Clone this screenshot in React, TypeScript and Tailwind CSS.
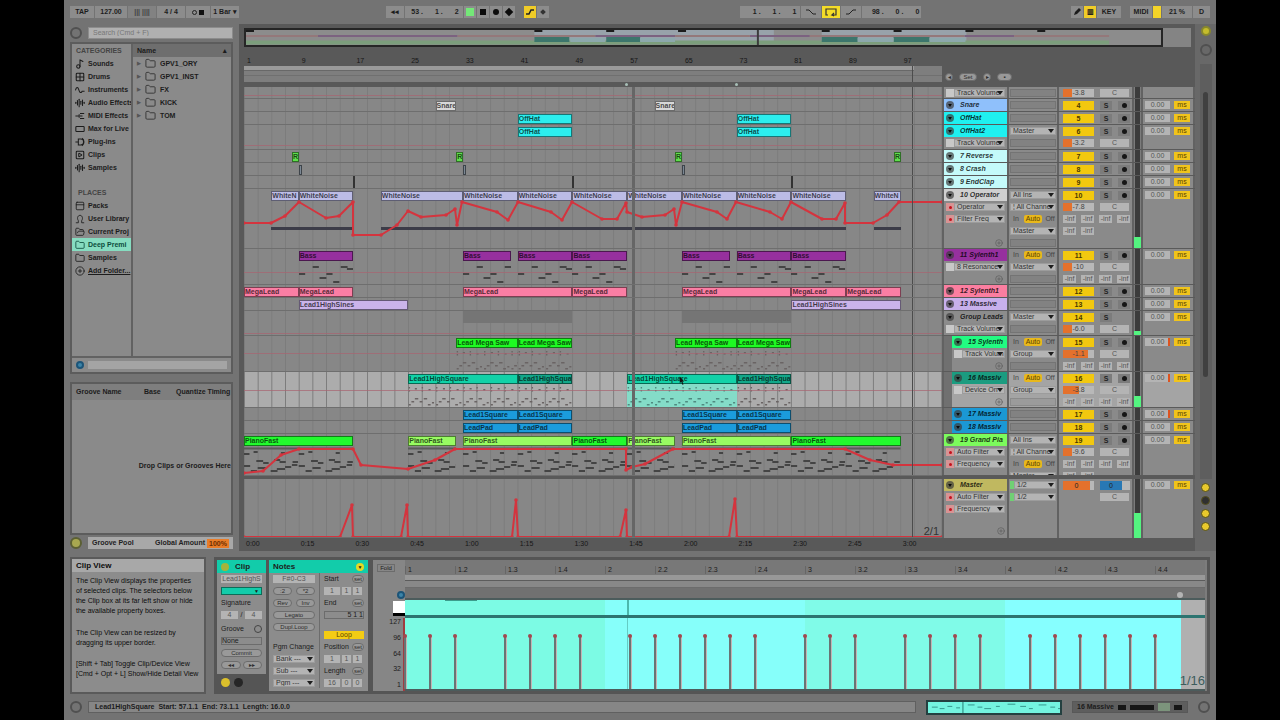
import type { ReactNode } from 'react'
import {
  AudioLines,
  CirclePlus,
  Folder,
  FolderOpen,
  Grid2x2,
  Music2,
  PanelTop,
  RectangleHorizontal,
  SquarePlay,
} from 'lucide-react'

const BARS = 102

interface Clip {
  name: string
  start: number
  end: number
  color: string
  notes?: NotePattern
  selected?: boolean
}

interface SubRow {
  device?: string
  armed?: boolean
  add?: boolean
  io?: string
  volume?: number
  level?: string
  sends?: number
}

interface Track {
  name?: string
  num?: number
  color?: string
  height: string
  nested?: boolean
  io?: string
  noArm?: boolean
  lit?: boolean
  meter?: number
  delayMark?: boolean
  hits?: number[]
  clips?: Clip[]
  subs?: SubRow[]
  ghost?: number
  bars?: number[][]
  shade?: number[][]
  curve?: number[][]
}

type NotePattern = 'bass' | 'lead' | 'piano'

const repeat = (name: string, color: string, spans: number[][], notes?: NotePattern): Clip[] =>
  spans.map(([start, end]) => ({ name, color, start, end, notes }))

const LEAD = 'bg-[#12d2a8]'
const LEAD_DARK = 'bg-[#12a88a]'
const GREEN = 'bg-[#22fa2e]'
const LIME = 'bg-[#98fb62]'
const NOISE = 'bg-[#bcbce6]'

// curve points are [x, y] with x measured over a 698 unit wide lane
const FILTER_CURVE = [
  [0, 34], [27, 34], [41, 27], [55, 13], [82, 29], [95, 27], [109, 13], [109, 46], [137, 46], [153, 36], [164, 22],
  [177, 28], [202, 26], [211, 20], [213, 36], [218, 13], [253, 23], [264, 31], [274, 13], [307, 23], [318, 31],
  [328, 13], [358, 30], [373, 30], [382, 14], [383, 23], [398, 28], [421, 26], [430, 20], [432, 36], [438, 13],
  [473, 23], [483, 30], [492, 13], [526, 23], [538, 30], [547, 13], [578, 30], [592, 30], [601, 14], [601, 34],
  [629, 34], [643, 26], [655, 13], [698, 13],
]

const PIANO_CURVE = [
  [0, 39], [19, 37], [37, 21], [55, 15], [109, 15], [117, 31], [164, 35], [191, 26], [211, 15], [382, 15], [382, 36],
  [388, 33], [401, 30], [429, 15], [601, 15], [626, 26], [649, 31], [698, 31],
]

const MASTER_CURVE = [
  [0, 58], [96, 58], [108, 26], [109, 58], [157, 58], [163, 26], [164, 58], [268, 58], [272, 21], [274, 58],
  [376, 58], [382, 31], [383, 58], [485, 58], [491, 20], [493, 58], [698, 58],
]

const TRACKS: Track[] = [
  {
    height: 'h-3',
    ghost: 8,
    subs: [{ device: 'Track Volume', io: '-', volume: 28, level: '-3.8' }],
  },
  {
    name: 'Snare',
    num: 4,
    color: 'bg-[#8fc0fb]',
    height: 'h-[13px]',
    clips: repeat('Snare', 'bg-[#d8d8d8]', [[29, 32], [61, 64]]),
  },
  {
    name: 'OffHat',
    num: 5,
    color: 'bg-[#1ff0f0]',
    height: 'h-[13px]',
    clips: repeat('OffHat', 'bg-[#2ceeee]', [[41, 49], [73, 81]]),
  },
  {
    name: 'OffHat2',
    num: 6,
    color: 'bg-[#1ff0f0]',
    height: 'h-[25px]',
    io: 'Master',
    ghost: 20,
    clips: repeat('OffHat', 'bg-[#2ceeee]', [[41, 49], [73, 81]]),
    subs: [{ device: 'Track Volume', io: '-', volume: 30, level: '-3.2' }],
  },
  {
    name: '7 Reverse',
    num: 7,
    color: 'bg-[#c4fafa]',
    height: 'h-[13px]',
    clips: repeat('R', 'bg-[#5fe04c]', [[8, 9], [32, 33], [64, 65], [96, 97]]),
  },
  {
    name: '8 Crash',
    num: 8,
    color: 'bg-[#c4fafa]',
    height: 'h-[13px]',
    clips: repeat('', 'bg-[#7c8894]', [[9, 9.5], [33, 33.5], [65, 65.5]]),
  },
  { name: '9 EndClap', num: 9, color: 'bg-[#c4fafa]', height: 'h-[13px]', hits: [16.9, 48.9, 80.9] },
  {
    name: '10 Operator',
    num: 10,
    color: 'bg-[#cfcfcf]',
    height: 'h-[60px]',
    io: 'All Ins',
    meter: 11,
    clips: [
      ...repeat('WhiteN', NOISE, [[5, 9], [93, 97]]),
      ...repeat('WhiteNoise', NOISE, [
        [9, 17], [21, 33], [33, 41], [41, 49], [49, 57], [57, 65], [65, 73], [73, 81], [81, 89],
      ]),
    ],
    bars: [[5, 17], [21, 89], [93, 97]],
    curve: FILTER_CURVE,
    subs: [
      { device: 'Operator', armed: true, io: '¦ All Channe', volume: 28, level: '-7.8' },
      { device: 'Filter Freq', armed: true, io: 'monitor', sends: 4 },
      { io: 'Master', sends: 2 },
      { add: true, io: '-' },
    ],
  },
  {
    name: '11 Sylenth1',
    num: 11,
    color: 'bg-[#96309e]',
    height: 'h-9',
    io: 'monitor',
    ghost: 23,
    clips: repeat(
      'Bass',
      'bg-[#96309e]',
      [[9, 17], [33, 40], [41, 49], [49, 57], [65, 72], [73, 81], [81, 89]],
      'bass',
    ),
    subs: [
      { device: '8 Resonance', io: 'Master', volume: 28, level: '-10' },
      { add: true, io: '-', sends: 4 },
    ],
  },
  {
    name: '12 Sylenth1',
    num: 12,
    color: 'bg-[#fb7ea0]',
    height: 'h-[13px]',
    clips: repeat('MegaLead', 'bg-[#fb7ea4]', [[1, 9], [9, 17], [33, 49], [49, 57], [65, 81], [81, 89], [89, 97]]),
  },
  {
    name: '13 Massive',
    num: 13,
    color: 'bg-[#c8b0ec]',
    height: 'h-[13px]',
    clips: repeat('Lead1HighSines', 'bg-[#cbb4ea]', [[9, 25], [81, 97]]),
  },
  {
    name: 'Group Leads',
    num: 14,
    color: 'bg-[#8c8c8c]',
    height: 'h-[25px]',
    io: 'Master',
    noArm: true,
    meter: 4,
    ghost: 22,
    shade: [[33, 49], [65, 81]],
    subs: [{ device: 'Track Volume', io: '-', volume: 30, level: '-6.0' }],
  },
  {
    name: '15 Sylenth',
    num: 15,
    color: 'bg-[#22fb82]',
    height: 'h-9',
    nested: true,
    io: 'monitor',
    delayMark: true,
    ghost: 17,
    clips: repeat('Lead Mega Saw', 'bg-[#1efa22]', [[32, 41], [41, 49], [64, 73], [73, 81]], 'lead'),
    subs: [
      { device: 'Track Volum', io: 'Group', volume: 80, level: '-1.1' },
      { add: true, io: '-', sends: 4 },
    ],
  },
  {
    name: '16 Massiv',
    num: 16,
    color: 'bg-[#1b9c80]',
    height: 'h-9',
    nested: true,
    lit: true,
    meter: 11,
    io: 'monitor',
    delayMark: true,
    ghost: 18,
    clips: [
      { name: 'Lead1HighSquare', color: LEAD, start: 25, end: 41, notes: 'lead' },
      { name: 'Lead1HighSquar', color: LEAD_DARK, start: 41, end: 49, notes: 'lead' },
      { name: 'Lead1HighSquare', color: LEAD, start: 57, end: 73, notes: 'lead', selected: true },
      { name: 'Lead1HighSquar', color: LEAD_DARK, start: 73, end: 81, notes: 'lead' },
    ],
    subs: [
      { device: 'Device On', io: 'Group', volume: 52, level: '-3.8' },
      { add: true, io: '-', sends: 4 },
    ],
  },
  {
    name: '17 Massiv',
    num: 17,
    color: 'bg-[#1b98d4]',
    height: 'h-[13px]',
    nested: true,
    delayMark: true,
    clips: repeat('Lead1Square', 'bg-[#1b9cdc]', [[33, 41], [41, 49], [65, 73], [73, 81]]),
  },
  {
    name: '18 Massiv',
    num: 18,
    color: 'bg-[#1b98d4]',
    height: 'h-[13px]',
    nested: true,
    clips: repeat('LeadPad', 'bg-[#1b9cdc]', [[33, 41], [41, 49], [65, 73], [73, 81]]),
  },
  {
    name: '19 Grand Pia',
    num: 19,
    color: 'bg-[#7cfb5c]',
    height: 'h-[42px]',
    io: 'All Ins',
    clips: [
      { name: 'PianoFast', color: GREEN, start: 1, end: 17, notes: 'piano' },
      { name: 'PianoFast', color: LIME, start: 25, end: 32, notes: 'piano' },
      { name: 'PianoFast', color: LIME, start: 33, end: 49, notes: 'piano' },
      { name: 'PianoFast', color: GREEN, start: 49, end: 57, notes: 'piano' },
      { name: 'PianoFast', color: LIME, start: 57, end: 64, notes: 'piano' },
      { name: 'PianoFast', color: LIME, start: 65, end: 81, notes: 'piano' },
      { name: 'PianoFast', color: GREEN, start: 81, end: 97, notes: 'piano' },
    ],
    curve: PIANO_CURVE,
    subs: [
      { device: 'Auto Filter', armed: true, io: '¦ All Channe', volume: 28, level: '-9.6' },
      { device: 'Frequency', armed: true, io: 'monitor', sends: 4 },
      { io: 'Master', sends: 2 },
    ],
  },
]

// [x, y, width] inside a tile that spans eight bars (80 units)
const NOTES: Record<NotePattern, number[][]> = {
  bass: [[0, 12, 9], [20, 5, 9], [30, 16, 10], [40, 12, 9], [50, 20, 9], [61, 5, 10], [70, 7, 9]],
  lead: [
    [1, 3, 2], [1, 6, 2], [10, 4, 3], [20, 3, 2], [20, 6, 2], [30, 5, 3], [41, 3, 2], [41, 6, 2], [51, 4, 3],
    [61, 3, 2], [61, 6, 2], [71, 5, 3], [1, 20, 3], [5, 17, 4], [10, 14, 5], [17, 17, 4], [23, 14, 5], [29, 20, 4],
    [35, 18, 3], [41, 20, 3], [45, 17, 4], [50, 14, 5], [57, 17, 4], [63, 14, 5], [69, 20, 4], [75, 18, 3],
  ],
  piano: [
    [0, 7, 8], [14, 5, 6], [54, 6, 6], [18, 14, 10], [28, 16, 8], [44, 13, 9], [52, 15, 9], [71, 15, 8], [0, 19, 9],
    [10, 24, 9], [20, 21, 12], [39, 24, 10], [48, 22, 12], [60, 20, 9], [70, 18, 8],
  ],
}

const percent = (bar: number): string => `${((bar - 1) / BARS) * 100}%`

const Select = ({ label, value, className = '' }: { label: string; value: string; className?: string }) => (
  <span className={`relative flex h-2 min-w-0 flex-1 ${className}`}>
    <select
      aria-label={label}
      className="h-2 w-full appearance-none overflow-hidden border border-[#9c9c9c] bg-[#b4b4b4] pl-0.5 text-[7px] leading-[6px] text-[#333]"
    >
      <option>{value}</option>
    </select>
    <svg viewBox="0 0 6 4" className="pointer-events-none absolute top-0.5 right-0.5 h-1 w-1.5">
      <path d="M0 0h6L3 4z" fill="#1c1c1c" />
    </svg>
  </span>
)

const Field = ({ label, value, className = '' }: { label: string; value: string; className?: string }) => (
  <input
    aria-label={label}
    defaultValue={value}
    className={`h-2 min-w-0 bg-[#b4b4b4] text-center text-[7px] leading-2 text-[#555] ${className}`}
  />
)

const Pill = ({ children, className = '' }: { children?: ReactNode; className?: string }) => (
  <button
    className={`flex h-2 items-center justify-center rounded-sm border border-[#6c6c6c] bg-[#999] text-[6px] leading-[6px] text-[#2c2c2c] ${className}`}
  >
    {children}
  </button>
)

const NoteTiles = ({ clip }: { clip: Clip }) => {
  const width = (clip.end - clip.start) * 10
  const tiles = Array.from({ length: Math.ceil(width / 80) }, (_, i) => i * 80)
  const pattern = clip.notes ? NOTES[clip.notes] : []
  const thin = clip.notes === 'lead'
  return (
    <svg
      viewBox={`0 0 ${width} 28`}
      preserveAspectRatio="none"
      className={`h-7 w-full ${clip.selected ? 'bg-[#84dcc8]' : ''}`}
    >
      {clip.notes === 'piano' && <path d={`M0 2.5H${width}`} stroke="#5a5a5a" strokeWidth={2} />}
      {tiles.map((x) =>
        pattern.map(([nx, ny, nw]) => (
          <rect
            key={`${x}-${nx}-${ny}`}
            x={x + nx}
            y={ny}
            width={nw}
            height={thin ? 1.5 : 2}
            fill={thin ? (clip.selected ? '#4f8a80' : '#6a6464') : '#444'}
          />
        )),
      )}
    </svg>
  )
}

const ClipBlock = ({ clip }: { clip: Clip }) => (
  <div
    className="absolute inset-y-0 overflow-hidden pt-0.5"
    style={{ left: percent(clip.start), width: `${((clip.end - clip.start) / BARS) * 100}%` }}
  >
    <div
      className={`h-2.5 overflow-hidden border border-black/50 text-[7px] leading-2 font-bold whitespace-nowrap text-black/70 ${clip.color}`}
    >
      {clip.name}
    </div>
    {clip.notes && <NoteTiles clip={clip} />}
  </div>
)

const Curve = ({ points, height }: { points: number[][]; height: number }) => (
  <svg
    viewBox={`0 0 698 ${height}`}
    preserveAspectRatio="none"
    className="pointer-events-none absolute inset-x-0 top-0 w-full"
    style={{ height }}
  >
    <polyline
      points={points.map((p) => p.join(',')).join(' ')}
      fill="none"
      stroke="#d4343e"
      strokeWidth={2}
      strokeLinejoin="round"
    />
    {points.map(([x, y], i) => (
      <circle key={i} cx={x} cy={y} r={1.8} fill="#d4343e" />
    ))}
  </svg>
)

const Lane = ({ track }: { track: Track }) => (
  <div
    className={`relative min-w-0 flex-1 overflow-hidden border-b border-[#6e6e6e] bg-[linear-gradient(90deg,#7c7c7c_1px,transparent_1px)] bg-[length:1.9608%_100%] ${track.lit ? 'bg-[#acacac]' : 'bg-[#878787]'}`}
  >
    {track.shade?.map(([a, b]) => (
      <div
        key={a}
        className="absolute top-0 h-3 bg-[#757575]"
        style={{ left: percent(a), width: `${((b - a) / BARS) * 100}%` }}
      />
    ))}
    {track.clips?.map((clip) => (
      <ClipBlock key={clip.start} clip={clip} />
    ))}
    {track.hits?.map((bar) => (
      <div key={bar} className="absolute inset-y-0 w-0.5 bg-[#333]" style={{ left: percent(bar) }} />
    ))}
    {track.bars?.map(([a, b]) => (
      <div
        key={a}
        className="absolute top-[38px] h-[3px] bg-[#3c3c48]"
        style={{ left: percent(a), width: `${((b - a) / BARS) * 100}%` }}
      />
    ))}
    {track.ghost && <div className="absolute inset-x-0 h-px bg-[#a86470]/70" style={{ top: track.ghost }} />}
    {track.curve && <Curve points={track.curve} height={track.num ? (track.num === 10 ? 60 : 42) : 59} />}
    <div className="absolute inset-y-0 w-[3px] bg-[#666]" style={{ left: percent(57.7) }} />
    <div className="absolute inset-y-0 w-px bg-[#4c4c4c]" style={{ left: percent(98.6) }} />
    {track.num === 16 && (
      <svg viewBox="0 0 8 12" className="absolute top-1 h-2.5 w-1.5" style={{ left: percent(64.5) }}>
        <path d="M1 0v9l2-2 1.5 4 1.5-.5-1.5-4H7z" fill="#111" />
      </svg>
    )}
  </div>
)

const Monitor = () => (
  <span className="flex flex-1 items-center justify-between text-[7px] leading-2 text-[#444]">
    <button className="w-3">In</button>
    <button className="h-2 rounded-xs bg-[#e8b81c] px-0.5 text-[#5a4200]">Auto</button>
    <button className="w-3">Off</button>
  </span>
)

const IoSlot = ({ io }: { io?: string }) => {
  if (!io) return <span className="h-2 flex-1" />
  if (io === 'monitor') return <Monitor />
  if (io === '-') return <span className="h-2 flex-1 border border-black/10 bg-black/5" />
  return <Select label="Routing" value={io} />
}

const MixSlot = ({ row }: { row: SubRow }) => {
  if (row.sends) {
    return (
      <span className="flex flex-1 gap-[5px]">
        {Array.from({ length: row.sends }, (_, i) => (
          <Field key={i} label={`Send ${i + 1}`} value="-inf" className="w-[13px]" />
        ))}
      </span>
    )
  }
  if (!row.level) return <span className="flex-1" />
  return (
    <span className="flex flex-1 gap-1.5">
      <span className="relative flex h-2 w-[31px] bg-[#b8b8b8] text-[7px] leading-2 text-[#444]">
        <span className="bg-[#e4712c]" style={{ width: `${row.volume}%` }} />
        <span className="absolute inset-0 text-center">{row.level}</span>
      </span>
      <Field label="Pan" value="C" className="w-[29px]" />
    </span>
  )
}

const TrackPower = () => (
  <span className="flex size-2 shrink-0 items-center justify-center rounded-full bg-[#3c3c3c]/70">
    <svg viewBox="0 0 8 8" className="size-1.5">
      <path d="M1.5 2.5h5L4 6.5z" fill="#0a0a0a" />
    </svg>
  </span>
)

const AddLane = () => (
  <button aria-label="Add lane" className="mr-0.5 ml-auto">
    <CirclePlus size={8} color="#5c5c5c" />
  </button>
)

const Cell = ({ width, children, lit }: { width: string; children?: ReactNode; lit?: boolean }) => (
  <div className={`shrink-0 overflow-hidden ${lit ? 'bg-[#a4a4a4]' : 'bg-[#8a8a8a]'} ${width}`}>{children}</div>
)

const Meter = ({ level = 0 }: { level?: number }) => (
  <div className="flex w-[7px] shrink-0 flex-col justify-end bg-[#7c7c7c]">
    <div className="mx-px flex-1 bg-[#3c3c3c]" />
    <div className="bg-[#54f480]" style={{ height: level }} />
  </div>
)

const Delay = ({ mark }: { mark?: boolean }) => (
  <div className="flex h-3 items-center gap-1 pl-0.5">
    <span className="relative flex">
      <Field label="Track delay" value="0.00" className="w-[25px]" />
      {mark && <span className="absolute inset-y-0 right-0 w-0.5 bg-[#dc5420]" />}
    </span>
    <button className="h-2 w-4 bg-[#f0c41c] text-[7px] leading-2 text-[#5a4200]">ms</button>
  </div>
)

const TrackStrip = ({ track }: { track: Track }) => {
  const subs = track.subs ?? []
  return (
    <div className="flex w-[253px] shrink-0 gap-0.5 overflow-hidden border-b border-[#5a5a5a] bg-[#626262] pl-0.5">
      <div
        className={`w-[63px] shrink-0 overflow-hidden ${track.lit ? 'bg-[#a4a4a4]' : 'bg-[#8a8a8a]'} ${track.nested ? 'border-l-8 border-[#707070]' : ''}`}
      >
        {track.name && (
          <div className={`flex h-3 items-center gap-1.5 pl-0.5 ${track.color}`}>
            <TrackPower />
            <span className="text-[7px] leading-3 font-bold whitespace-nowrap text-black/80 italic">{track.name}</span>
          </div>
        )}
        {subs.map((row, i) => (
          <div key={i} className="flex h-3 items-center px-0.5">
            {row.device && (
              <>
                <span
                  className={`flex size-2 shrink-0 items-center justify-center ${row.armed ? 'bg-[#d89494]' : 'bg-[#c8c8c8]'}`}
                >
                  {row.armed && <span className="size-[3px] rounded-full bg-[#c4101c]" />}
                </span>
                <Select label="Automation" value={row.device} />
              </>
            )}
            {row.add && <AddLane />}
          </div>
        ))}
      </div>
      <Cell width="w-12" lit={track.lit}>
        {track.name && (
          <div className="flex h-3 items-center px-px">
            <IoSlot io={track.io ?? '-'} />
          </div>
        )}
        {subs.map((row, i) => (
          <div key={i} className="flex h-3 items-center px-px">
            <IoSlot io={row.io} />
          </div>
        ))}
      </Cell>
      <Cell width="w-[73px]" lit={track.lit}>
        {track.name && (
          <div className="flex h-3 items-center gap-1.5 pl-1">
            <button className="h-[9px] w-[31px] bg-[#f2c80f] text-[7px] leading-[9px] font-bold text-[#4a3800]">
              {track.num}
            </button>
            <button className="h-[9px] w-3 bg-[#7c7c7c] text-[7px] leading-[9px] font-bold text-[#222]">S</button>
            {!track.noArm && (
              <button aria-label="Arm" className="flex h-[9px] w-3 items-center justify-center bg-[#7c7c7c]">
                <span className="size-[5px] rounded-full bg-[#161616]" />
              </button>
            )}
          </div>
        )}
        {subs.map((row, i) => (
          <div key={i} className="flex h-3 items-center pl-1">
            <MixSlot row={row} />
          </div>
        ))}
      </Cell>
      <Meter level={track.meter} />
      <Cell width="w-[50px]" lit={track.lit}>
        {track.name && <Delay mark={track.delayMark} />}
      </Cell>
    </div>
  )
}

const MasterStrip = () => (
  <div className="flex w-[253px] shrink-0 gap-0.5 bg-[#626262] pl-0.5">
    <div className="w-[63px] shrink-0 bg-[#8a8a8a]">
      <div className="flex h-3 items-center gap-1.5 bg-[#c0b860] pl-0.5">
        <TrackPower />
        <span className="text-[7px] leading-3 font-bold text-black/80 italic">Master</span>
      </div>
      {['Auto Filter', 'Frequency'].map((name) => (
        <div key={name} className="flex h-3 items-center px-0.5">
          <span className="flex size-2 items-center justify-center bg-[#d89494]">
            <span className="size-[3px] rounded-full bg-[#c4101c]" />
          </span>
          <Select label="Automation" value={name} />
        </div>
      ))}
      <div className="flex h-5 items-end">
        <AddLane />
      </div>
    </div>
    <Cell width="w-12">
      {['Cue out', 'Master out'].map((label) => (
        <div key={label} className="flex h-3 items-center px-px">
          <span className="h-2 w-1 bg-[#70d074]" />
          <Select label={label} value="1/2" />
        </div>
      ))}
    </Cell>
    <Cell width="w-[73px]">
      <div className="flex h-3 items-center gap-1.5 pl-1 text-center text-[7px] leading-[9px] text-[#222]">
        <span className="h-[9px] w-[31px] border-r-4 border-[#b8b8b8] bg-[#e4712c]">0</span>
        <span className="h-[9px] w-[30px] border-r-8 border-[#b8b8b8] bg-[#2878b4]">0</span>
      </div>
      <div className="flex h-3 items-center pl-[41px]">
        <Field label="Pan" value="C" className="w-[29px]" />
      </div>
    </Cell>
    <Meter level={25} />
    <Cell width="w-[50px]">
      <Delay />
    </Cell>
  </div>
)

const Overview = () => (
  <div className="flex h-[19px]">
    <div className="flex-1 border-2 border-[#262626] bg-[#8c8c8c]">
      <svg viewBox="0 0 917 15" preserveAspectRatio="none" className="h-full w-full">
        <path d="M289 0h240v11H289zM577 0h145v11H577z" fill="#98a2aa" />
        <path d="M0 12.5h865" stroke="#7c9e7c" strokeWidth={4} />
        <path d="M72 6h140M350 6h80M505 6h60M720 6h50" stroke="#7c6280" strokeWidth={2} />
        <path d="M0 6h72M212 6h138M430 6h75M565 6h155M770 6h95" stroke="#94787a" strokeWidth={2} />
        <path d="M289 9.5h35M361 9.5h34M577 9.5h36M649 9.5h36" stroke="#3c766c" strokeWidth={5} />
        <path d="M325 10h35M395 10h35M613 10h36M685 10h36" stroke="#8ca8ac" strokeWidth={4} />
        <path
          d="M0 1h8M289 1h8M361 1h8M433 1h8M577 1h8M649 1h8M721 1h8M793 1h8"
          stroke="#1c1c1c"
          strokeWidth={2}
        />
        <path d="M513 0v15" stroke="#3c3c3c" strokeWidth={2} />
      </svg>
    </div>
    <div className="mr-1 w-7 bg-[#848484]" />
  </div>
)

const Arrangement = () => (
  <section className="flex min-w-0 flex-1 flex-col bg-[#595959] pt-1 pl-[5px]">
    <Overview />
    <div className="flex h-10">
      <div className="min-w-0 flex-1">
        <div className="flex h-[19px] items-end overflow-hidden pb-px text-[7px] leading-2 text-[#161616]">
          {Array.from({ length: 13 }, (_, i) => (
            <span key={i} className="w-[7.843%] shrink-0 pl-[3px]">
              {i * 8 + 1}
            </span>
          ))}
        </div>
        <div className="relative h-4 bg-[#7e7e7e]">
          <div className="h-[5px] w-[96%] border-b border-[#686868] bg-[#9a9a9a]" />
          <div className="h-[5px] border-b border-[#707070]" />
          <div className="absolute inset-y-0 w-px bg-[#4c4c4c]" style={{ left: percent(98.6) }} />
        </div>
        <div className="relative h-[5px]">
          {[56.7, 72.7].map((bar) => (
            <div
              key={bar}
              className="absolute top-px size-[3px] rounded-full bg-[#a8c0b8]"
              style={{ left: percent(bar) }}
            />
          ))}
        </div>
      </div>
      <div className="flex w-[253px] items-end gap-1.5 pb-1.5 pl-[3px]">
        <Pill className="w-2">◂</Pill>
        <Pill className="w-[18px]">Set</Pill>
        <Pill className="w-2">▸</Pill>
        <Pill className="w-[15px]">▪</Pill>
      </div>
    </div>
    {TRACKS.map((track, i) => (
      <div key={i} className={`flex ${track.height}`}>
        <Lane track={track} />
        <TrackStrip track={track} />
      </div>
    ))}
    <div className="h-[3px]" />
    <div className="relative flex h-[59px]">
      <Lane track={{ height: '', curve: MASTER_CURVE }} />
      <MasterStrip />
      <span className="absolute right-[256px] bottom-px text-[11px] leading-3 text-[#333]">2/1</span>
    </div>
    <div className="mr-[253px] flex h-3 items-center overflow-hidden text-[7px] leading-2 text-[#161616]">
      {['0:00', '0:15', '0:30', '0:45', '1:00', '1:15', '1:30', '1:45', '2:00', '2:15', '2:30', '2:45', '3:00'].map(
        (time) => (
          <span key={time} className="w-[7.843%] shrink-0 pl-0.5">
            {time}
          </span>
        ),
      )}
    </div>
  </section>
)

const Box = ({
  children,
  color = 'bg-[#8c8c8c]',
  className = '',
}: {
  children?: ReactNode
  color?: string
  className?: string
}) => (
  <span
    className={`flex h-3 items-center justify-center text-[7px] leading-3 font-bold text-[#1c1c1c] ${color} ${className}`}
  >
    {children}
  </span>
)

const Transport = () => (
  <header className="flex h-6 shrink-0 items-center px-1.5">
    <div className="flex gap-px">
      <Box className="w-6">TAP</Box>
      <Box className="w-8">127.00</Box>
      <Box className="w-7 opacity-60">||| ||||</Box>
      <Box className="w-7">4 / 4</Box>
      <Box className="w-6 gap-0.5">
        <span className="size-[5px] rounded-full border border-[#222]" />
        <span className="size-[5px] bg-[#111]" />
      </Box>
      <Box className="w-7">1 Bar ▾</Box>
    </div>
    <div className="grow-[147]" />
    <div className="flex gap-px">
      <Box className="w-[18px]">◂◂</Box>
      <Box className="w-[58px] justify-end gap-3 pr-1">
        <span>53 .</span>
        <span>1 .</span>
        <span>2</span>
      </Box>
      <button aria-label="Play">
        <Box className="w-3">
          <span className="size-2 bg-[#74e878]" />
        </Box>
      </button>
      <button aria-label="Stop">
        <Box className="w-3">
          <span className="size-1.5 bg-[#0c0c0c]" />
        </Box>
      </button>
      <button aria-label="Record">
        <Box className="w-3">
          <span className="size-1.5 rounded-full bg-[#0c0c0c]" />
        </Box>
      </button>
      <button aria-label="Overdub">
        <Box className="w-3">
          <span className="size-1.5 rotate-45 bg-[#0c0c0c]" />
        </Box>
      </button>
      <button aria-label="Automation arm" className="ml-2">
        <Box className="w-3" color="bg-[#f0cc28]">
          <svg viewBox="0 0 10 10" className="size-2.5">
            <path d="M1 7h3l2-4h3" fill="none" stroke="#222" strokeWidth={1.5} />
          </svg>
        </Box>
      </button>
      <button aria-label="Re-enable automation">
        <Box className="w-3">
          <span className="size-1 rotate-45 bg-[#333]" />
        </Box>
      </button>
    </div>
    <div className="grow-[192]" />
    <div className="flex gap-px">
      <Box className="w-[60px] justify-end gap-3 pr-1">
        <span>1 .</span>
        <span>1 .</span>
        <span>1</span>
      </Box>
      <Box className="w-5">
        <svg viewBox="0 0 12 8" className="h-2 w-3">
          <path d="M1 2h3l4 4h3" fill="none" stroke="#222" />
        </svg>
      </Box>
      <button aria-label="Loop">
        <Box className="w-[18px]" color="bg-[#f4dc28]">
          <svg viewBox="0 0 14 10" className="h-2.5 w-3.5">
            <path d="M4 8H2V2h10v6H8l2-2M8 8l2 1" fill="none" stroke="#333" strokeWidth={1.2} />
          </svg>
        </Box>
      </button>
      <Box className="w-5">
        <svg viewBox="0 0 12 8" className="h-2 w-3">
          <path d="M1 6h3l4-4h3" fill="none" stroke="#222" />
        </svg>
      </Box>
      <Box className="w-[59px] justify-end gap-3 pr-0.5">
        <span>98 .</span>
        <span>0 .</span>
        <span>0</span>
      </Box>
    </div>
    <div className="grow-[150]" />
    <div className="flex gap-px">
      <Box className="w-3">
        <svg viewBox="0 0 10 10" className="size-2.5">
          <path d="M2 8l1-3 4-4 2 2-4 4z" fill="#1c1c1c" />
        </svg>
      </Box>
      <Box className="w-3" color="bg-[#f0cc28]">
        ▥
      </Box>
      <Box className="w-6">KEY</Box>
      <Box className="ml-2 w-[22px]">MIDI</Box>
      <Box className="w-2" color="bg-[#f4d428]" />
      <Box className="w-[30px]">21 %</Box>
      <Box className="w-[17px]">D</Box>
    </div>
  </header>
)

interface IconProps {
  size?: number
  strokeWidth?: number
  className?: string
}

const icon = (path: string) => {
  const Drawn = ({ size = 10, strokeWidth = 2, className }: IconProps) => (
    <svg
      width={size}
      height={size}
      viewBox="0 0 24 24"
      fill="none"
      stroke="currentColor"
      strokeWidth={strokeWidth}
      className={className}
    >
      <path d={path} />
    </svg>
  )
  return Drawn
}

const Wave = icon('M1 13C3 4 7 4 9 11s5 10 8 4h6')
const MidiLines = icon('M1 12h10M12 6h10M12 12h6M12 18h10M10 8v8')
const PlugD = icon('M1 12h6M8 5h6c9 0 9 14 0 14H8zM17 3c6 4 6 14 0 18')
const UserLibrary = icon('M2 21h6v-5c-3-4-3-12 4-13 7 1 7 9 4 13v5h6')

const CATEGORIES = [
  { name: 'Sounds', Icon: Music2 },
  { name: 'Drums', Icon: Grid2x2 },
  { name: 'Instruments', Icon: Wave },
  { name: 'Audio Effects', Icon: AudioLines },
  { name: 'MIDI Effects', Icon: MidiLines },
  { name: 'Max for Live', Icon: RectangleHorizontal },
  { name: 'Plug-ins', Icon: PlugD },
  { name: 'Clips', Icon: SquarePlay },
  { name: 'Samples', Icon: AudioLines },
]

const PLACES = [
  { name: 'Packs', Icon: PanelTop },
  { name: 'User Library', Icon: UserLibrary },
  { name: 'Current Proj', Icon: FolderOpen },
  { name: 'Deep Premi', Icon: Folder, active: true },
  { name: 'Samples', Icon: Folder },
  { name: 'Add Folder...', Icon: CirclePlus, link: true },
]

const FOLDERS = ['GPV1_ORY', 'GPV1_INST', 'FX', 'KICK', 'TOM']

const Browser = () => (
  <div className="flex h-[332px] flex-col border-2 border-[#5c5c5c] bg-[#8a8a8a] text-[7px] leading-[13px] font-bold whitespace-nowrap text-[#1c1c1c]">
    <div className="flex flex-1">
      <div className="w-[61px] overflow-hidden border-r-2 border-[#626262]">
        <h2 className="h-[13px] pl-1 text-[7px] leading-[13px] text-[#444]">CATEGORIES</h2>
        {CATEGORIES.map(({ name, Icon }) => (
          <div key={name} className="flex h-[13px] items-center gap-[3px] pl-[3px]">
            <Icon size={10} strokeWidth={2.5} className="shrink-0" />
            {name}
          </div>
        ))}
        <h2 className="mt-3 h-[13px] pl-1.5 text-[7px] leading-[13px] text-[#444]">PLACES</h2>
        {PLACES.map(({ name, Icon, active, link }) => (
          <div
            key={name}
            className={`flex h-[13px] items-center gap-[3px] pl-[3px] ${active ? 'bg-[#86dcc0] text-[#0c4c3c]' : ''}`}
          >
            <Icon size={10} strokeWidth={2} className="shrink-0" />
            {link ? (
              <a href="#add-folder" className="underline">
                {name}
              </a>
            ) : (
              name
            )}
          </div>
        ))}
      </div>
      <div className="min-w-0 flex-1">
        <div className="flex h-[13px] justify-between bg-[#6e6e6e] px-1">
          <span>Name</span>
          <span>▴</span>
        </div>
        {FOLDERS.map((name) => (
          <div key={name} className="flex h-[13px] items-center gap-1 pl-1">
            <span className="w-1 text-[5px] text-[#555]">▶</span>
            <Folder size={11} strokeWidth={2} color="#333" />
            {name}
          </div>
        ))}
      </div>
    </div>
    <div className="flex h-4 items-center gap-1 border-t-2 border-[#626262] px-1">
      <span className="size-2 rounded-full border-2 border-[#1c5478] bg-[#3c84a8]" />
      <span className="h-2 flex-1 bg-[#a4a4a4]" />
    </div>
  </div>
)

const Sidebar = () => (
  <aside className="flex w-[175px] shrink-0 flex-col pr-1.5 pl-1.5">
    <div className="flex h-[18px] items-center gap-1.5">
      <span className="size-3 rounded-full border-2 border-[#505050]" />
      <input
        aria-label="Search"
        placeholder="Search (Cmd + F)"
        className="h-3 min-w-0 flex-1 border border-[#8c8c8c] bg-[#b0b0b0] px-1 text-[7px] leading-3 placeholder:text-[#777]"
      />
    </div>
    <Browser />
    <div className="mt-2 flex h-[153px] flex-col border-2 border-[#5c5c5c] bg-[#8a8a8a] text-[7px] font-bold whitespace-nowrap text-[#1c1c1c]">
      <div className="flex h-4 items-center overflow-hidden bg-[#7e7e7e] pl-1">
        <span className="w-17 shrink-0">Groove Name</span>
        <span className="w-8 shrink-0">Base</span>
        <span className="shrink-0">Quantize Timing</span>
      </div>
      <div className="flex flex-1 items-center justify-end overflow-hidden">Drop Clips or Grooves Here</div>
    </div>
    <div className="flex h-4 items-center gap-1.5">
      <span className="size-3 rounded-full border-2 border-[#5c6034] bg-[#a8a850]" />
      <div className="flex h-3 flex-1 items-center justify-between bg-[#a8a8a8] px-1 text-[7px] font-bold text-[#222]">
        <span>Groove Pool</span>
        <span className="flex items-center gap-0.5">
          Global Amount
          <span className="w-[22px] bg-[#e87c28] text-center leading-[9px] text-[#6c2c00]">100%</span>
        </span>
      </div>
    </div>
  </aside>
)

const RightRail = () => (
  <div className="flex w-[21px] shrink-0 flex-col items-center gap-1 bg-[#686868] pt-0.5">
    <span className="size-2.5 rounded-full border-2 border-[#88882c] bg-[#c4bc2c]" />
    <span className="mt-1 size-3 rounded-full border-2 border-[#505050]" />
    <div className="mt-1 flex w-3 flex-1 flex-col items-center bg-[#5e5e5e] pt-7">
      <div className="h-[285px] w-[5px] rounded-sm bg-[#404040]" />
    </div>
    {['bg-[#e8c82c]', 'bg-[#303030]', 'bg-[#e8c82c]', 'bg-[#e8c82c]'].map((color, i) => (
      <span key={i} className={`size-[9px] rounded-full border border-[#55501c] ${color}`} />
    ))}
    <div className="h-4" />
  </div>
)

const InfoView = () => (
  <section className="flex w-[136px] flex-col border-2 border-[#5a5a5a] bg-[#8c8c8c] text-[7px] leading-[10px] whitespace-nowrap text-[#0c0c0c]">
    <h2 className="h-[13px] bg-[#a8a8a8] pl-1 text-[8px] leading-[13px] font-bold">Clip View</h2>
    <p className="pt-1 pl-1">
      The Clip View displays the properties
      <br />
      of selected clips. The selectors below
      <br />
      the Clip box at its far left show or hide
      <br />
      the available property boxes.
    </p>
    <p className="mt-3 pl-1">
      The Clip View can be resized by
      <br />
      dragging its upper border.
    </p>
    <p className="mt-[11px] pl-1">
      [Shift + Tab] Toggle Clip/Device View
      <br />
      [Cmd + Opt + L] Show/Hide Detail View
    </p>
  </section>
)

const Triple = ({ label, values }: { label: string; values: string[] }) => (
  <span className="flex gap-0.5">
    <Field label={`${label} bars`} value={values[0]} className="w-4" />
    <Field label={`${label} beats`} value={values[1]} className="w-[9px]" />
    <Field label={`${label} sixteenths`} value={values[2]} className="w-[9px]" />
  </span>
)

const SetRow = ({ label }: { label: string }) => (
  <span className="flex items-center justify-between">
    {label}
    <Pill className="w-3">set</Pill>
  </span>
)

const ClipBoxes = () => (
  <section className="flex gap-[3px] text-[7px] leading-2 text-[#1c1c1c]">
    <div className="w-[49px]">
      <div className="flex h-[114px] flex-col gap-0.5 bg-[#8c8c8c]">
        <h2 className="flex h-[13px] shrink-0 items-center gap-1.5 bg-[#12ccaa] pl-1 text-[8px] font-bold">
          <span className="size-2 rounded-full bg-[#a4b43c]" />
          Clip
        </h2>
        <div className="flex flex-col gap-1 px-1">
          <Field label="Clip name" value="Lead1HighS" className="w-full" />
          <button
            aria-label="Clip color"
            className="flex h-2 items-center justify-end border border-[#0c6c58] bg-[#12ccaa] pr-0.5 text-[5px]"
          >
            ▼
          </button>
          <span>Signature</span>
          <span className="flex items-center justify-between">
            <Field label="Numerator" value="4" className="w-[17px]" />/
            <Field label="Denominator" value="4" className="w-[17px]" />
          </span>
          <span className="flex justify-between pt-0.5">
            Groove
            <span className="size-2 rounded-full border border-[#444]" />
          </span>
          <span className="h-2 border border-[#6c6c6c] leading-[6px]">None</span>
          <Pill>Commit</Pill>
          <span className="flex gap-0.5">
            <Pill className="flex-1">◂◂</Pill>
            <Pill className="flex-1">▸▸</Pill>
          </span>
        </div>
      </div>
      <div className="flex h-[17px] items-center gap-1 pl-1">
        <span className="size-[9px] rounded-full bg-[#dcc02c]" />
        <span className="size-[9px] rounded-full bg-[#262626]" />
      </div>
    </div>
    <div className="w-[99px] bg-[#8c8c8c]">
      <h2 className="flex h-[13px] items-center justify-between bg-[#12ccaa] px-1 text-[8px] font-bold">
        Notes
        <span className="flex size-2 items-center justify-center rounded-full bg-[#e4d824] text-[5px]">▼</span>
      </h2>
      <div className="flex h-[115px]">
        <div className="flex w-[51px] flex-col gap-1 border-r border-[#6c6c6c] px-1 pt-0.5">
          <Field label="Range" value="F#0-C3" className="w-full" />
          <span className="flex gap-1">
            <Pill className="flex-1">:2</Pill>
            <Pill className="flex-1">*2</Pill>
          </span>
          <span className="flex gap-1">
            <Pill className="flex-1">Rev</Pill>
            <Pill className="flex-1">Inv</Pill>
          </span>
          <Pill>Legato</Pill>
          <Pill>Dupl.Loop</Pill>
          <span className="pt-2">Pgm Change</span>
          <Select label="Bank" value="Bank ---" className="flex-none" />
          <Select label="Sub bank" value="Sub ---" className="flex-none" />
          <Select label="Program" value="Pgm ---" className="flex-none" />
        </div>
        <div className="flex flex-1 flex-col gap-1 px-1 pt-0.5">
          <SetRow label="Start" />
          <Triple label="Start" values={['1', '1', '1']} />
          <SetRow label="End" />
          <span className="h-2 border border-[#6c6c6c] text-right leading-[6px]">5 1 1</span>
          <button className="mt-2 h-2 bg-[#f4cc14] leading-2 text-[#5a4200]">Loop</button>
          <SetRow label="Position" />
          <Triple label="Position" values={['1', '1', '1']} />
          <SetRow label="Length" />
          <Triple label="Length" values={['16', '0', '0']} />
        </div>
      </div>
    </div>
  </section>
)

const BEATS = [
  '1', '1.2', '1.3', '1.4', '2', '2.2', '2.3', '2.4', '3', '3.2', '3.3', '3.4', '4', '4.2', '4.3', '4.4',
]
const VELOCITY_STEPS = [0, 1, 2, 4, 5, 6, 7, 9, 10, 11, 12, 13, 14]
const VELOCITIES = [...VELOCITY_STEPS, ...VELOCITY_STEPS.map((step) => step + 16)]

const EditorTints = () => (
  <>
    <span className="w-1/4 bg-[#7cfbe4]" />
    <span className="w-1/4 bg-[#86fffa]" />
    <span className="w-1/4 bg-[#80fbe8]" />
    <span className="w-[22%] bg-[#86ffff]" />
    <span className="flex-1 bg-[#b0b0b0]" />
  </>
)

const NoteEditor = () => (
  <section className="flex min-w-0 flex-1 bg-[#7c7c7c] pr-0.5">
    <div className="flex w-8 shrink-0 flex-col bg-[#868686] text-right text-[7px] leading-2 text-[#1c1c1c]">
      <button className="mt-1 ml-1 h-2 w-[18px] border border-[#6c6c6c] text-[6px] leading-[6px]">Fold</button>
      <span className="mt-[19px] ml-auto size-2 rounded-full border-2 border-[#1c5478] bg-[#3c84a8]" />
      <span className="mt-0.5 ml-auto h-[15px] w-3 border-b-[3px] border-black bg-white" />
      <div className="mt-0.5 flex flex-1 flex-col justify-between border-r-2 border-[#a03c40] pr-0.5 pb-0.5">
        {['127', '96', '64', '32', '1'].map((value) => (
          <span key={value}>{value}</span>
        ))}
      </div>
    </div>
    <div className="flex min-w-0 flex-1 flex-col">
      <div className="grid h-[15px] grid-cols-16 items-end bg-[#787878] pb-px text-[7px] leading-2 text-[#1c1c1c]">
        {BEATS.map((beat) => (
          <span key={beat} className="border-l border-[#666] pl-0.5">
            {beat}
          </span>
        ))}
      </div>
      <div className="h-1.5 border-b border-[#5c5c5c] bg-[#989898]" />
      <div className="h-[7px] border-b border-[#6c6c6c] bg-[#888]" />
      <div className="flex h-3 items-end border-b-2 border-[#4c5c5c] bg-[#717171]">
        <span className="ml-[96.5%] size-1.5 rounded-full bg-[#b4b4b4]" />
      </div>
      <div className="relative flex h-[15px]">
        <EditorTints />
        <span className="absolute top-0 left-[5%] h-px w-[4%] bg-[#3c9c8c]" />
        <span className="absolute inset-y-0 left-[27.7%] w-0.5 bg-[#4cb8ac]" />
      </div>
      <div className="h-[3px] bg-[#2c7470]" />
      <div className="relative flex flex-1 border-b-2 border-[#4c5c5c]">
        <EditorTints />
        <span className="absolute inset-y-0 left-[27.7%] w-px bg-[#64ccc4]" />
        {VELOCITIES.map((step) => (
          <span
            key={step}
            className="absolute top-[17px] bottom-0 -ml-px w-[3px] border-r border-[#c4b4b4] bg-[#687474]"
            style={{ left: `${step * 3.125}%` }}
          >
            <span className="absolute -top-px -left-px size-1 rounded-full bg-[#a04850]" />
          </span>
        ))}
        <span className="absolute right-0 bottom-0 text-[13px] leading-4 text-[#3c5c5c]">1/16</span>
      </div>
    </div>
  </section>
)

const StatusBar = () => (
  <footer className="flex h-[26px] shrink-0 items-center gap-2.5 px-1.5 text-[7px] font-bold text-[#1c1c1c]">
    <div className="flex flex-1 items-center gap-1.5">
      <span className="size-3 rounded-full border-2 border-[#505050]" />
      <p className="h-3 flex-1 border border-[#606060] bg-[#868686] pl-1.5 leading-[10px] whitespace-pre">
        Lead1HighSquare  Start: 57.1.1  End: 73.1.1  Length: 16.0.0
      </p>
    </div>
    <svg
      viewBox="0 0 136 15"
      preserveAspectRatio="none"
      className="h-[15px] w-[136px] border-2 border-[#244040] bg-[#74f4e0]"
    >
      <path
        d="M4 7h6m2 2h5m3-3h5m4 2h4m8-4h7m3 3h5m2 2h7m5-3h4m8-3h8m5 3h6m3 3h4m6-5h8m4 3h5m3 2h5"
        stroke="#2c8880"
        fill="none"
      />
      <path d="M36 0v15" stroke="#1c6c64" />
    </svg>
    <div className="flex h-3 w-[116px] items-center gap-1 border border-[#585858] bg-[#5e5e5e] pl-1">
      16 Massive
      <span className="h-[5px] w-2 bg-[#161616]" />
      <span className="h-[5px] w-6 bg-[#161616]" />
      <span className="h-2 w-3 bg-[#7c947c]" />
      <span className="h-[5px] w-2 bg-[#161616]" />
    </div>
    <span className="size-3 rounded-full border-2 border-[#505050]" />
  </footer>
)

const App = () => (
  <main className="min-h-screen bg-black px-16 font-['Liberation_Sans',Arial,sans-serif]">
    <div className="flex min-h-screen flex-col bg-[#737373]">
      <Transport />
      <div className="flex">
        <Sidebar />
        <Arrangement />
        <RightRail />
      </div>
      <div className="mt-1.5 flex h-[137px] gap-2 pr-1.5 pl-1.5">
        <InfoView />
        <div className="flex min-w-0 flex-1 gap-[5px] bg-[#555] p-[3px]">
          <ClipBoxes />
          <NoteEditor />
        </div>
      </div>
      <StatusBar />
    </div>
  </main>
)

export default App
